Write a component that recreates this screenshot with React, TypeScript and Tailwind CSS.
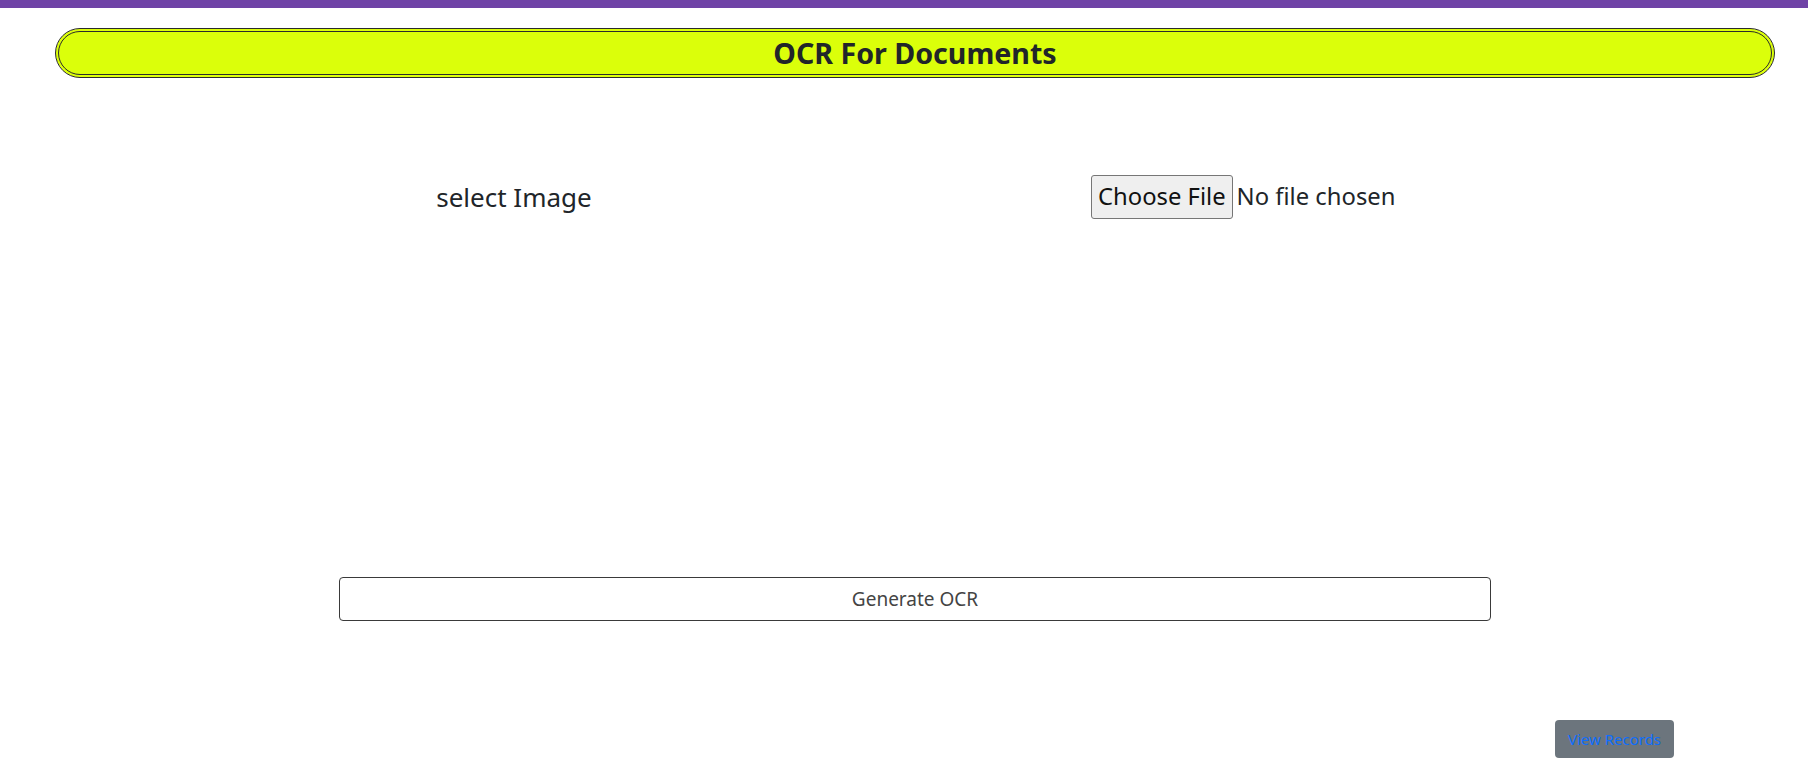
//
// OCR upload page.
//

const FONT = "font-['Noto_Sans','Liberation_Sans',sans-serif]";

export default function App() {
    return (
        <div className={`min-h-screen w-full bg-white text-[#212529] ${FONT}`}>
            {/* top accent bar */}
            <div className="h-2 w-full bg-[#6f43a6]" />

            {/* title pill */}
            <div className="pl-[55px] pr-[33px] pt-5">
                <div className="h-[50px] rounded-full border-4 border-double border-[#2b2b2b] bg-[#dbff0a] flex items-center justify-center">
                    <h1 className="text-[28.6px] font-bold leading-none text-[#212529]">OCR For Documents</h1>
                </div>
            </div>

            {/* file picker row */}
            <div className="mt-[97px] flex items-center h-[44px]">
                <div className="w-[1028px] text-center text-[26px] leading-none">select Image</div>
                <input
                    type="file"
                    accept="image/*"
                    className="ml-[63px] text-[23.8px] leading-none text-[#212529] file:mr-[4px] file:h-[44px] file:rounded-[3px] file:border file:border-[#767676] file:bg-[#efefef] file:px-[6px] file:text-[#111]"
                />
            </div>

            {/* generate button */}
            <div className="mt-[358px] ml-[339px] w-[1152px]">
                <button className="w-full h-[44px] rounded-[4px] border border-[#3a3a3a] bg-white text-[19px] text-[#444]">
                    Generate OCR
                </button>
            </div>

            {/* view records */}
            <div className="mt-[99px] flex justify-end pr-[134px]">
                <button className="w-[119px] h-[38px] rounded-[4px] bg-[#6c757d] text-[15px] text-[#0d6efd]">
                    View Records
                </button>
            </div>
        </div>
    );
}
